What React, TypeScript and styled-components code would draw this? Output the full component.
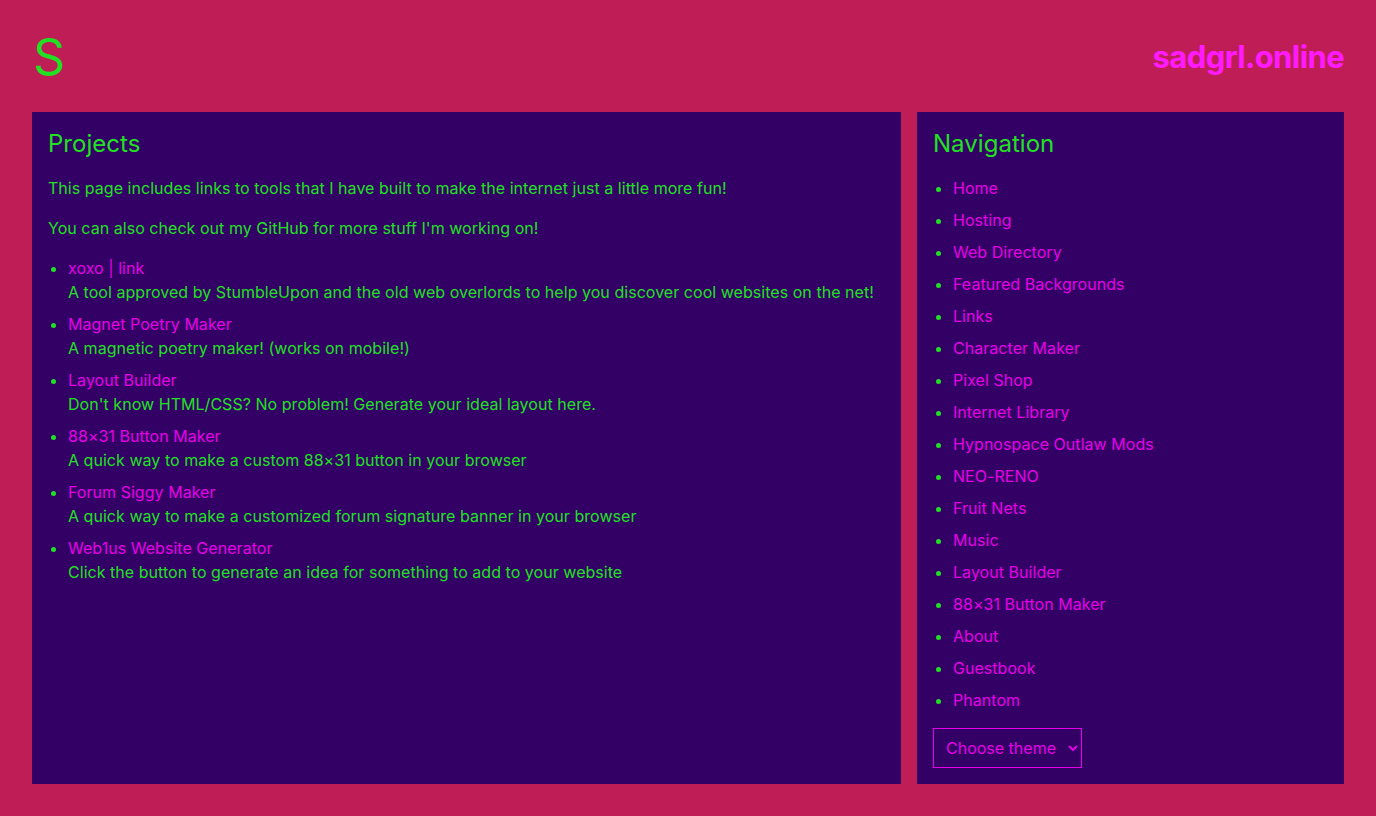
import React from "react";
import styled, { createGlobalStyle } from "styled-components";

const GREEN = "#22e022";
const MAGENTA = "#e600e6";
const BG = "#be1e55";
const PANEL = "#330066";

const Global = createGlobalStyle`
  html, body { margin: 0; padding: 0; background: ${BG}; }
  body { font-family: Inter, "Noto Sans", sans-serif; font-size: 16px; line-height: 24px; color: ${GREEN}; letter-spacing: 0.04px; }
  * { box-sizing: border-box; }
`;

const Page = styled.div`
  padding: 0 32px 32px 32px;
  min-height: 816px;
`;

const Header = styled.header`
  height: 112px;
  display: flex;
  align-items: center;
  justify-content: space-between;
`;

const Logo = styled.div`
  font-size: 50px;
  line-height: 1;
  color: ${GREEN};
  padding-left: 1px;
  margin-top: 1px;
`;

const SiteTitle = styled.a`
  font-size: 31px;
  font-weight: 700;
  color: #ff1aff;
  text-decoration: none;
  letter-spacing: -0.6px;
  margin-top: 1px;
`;

const Columns = styled.div`
  display: grid;
  grid-template-columns: 1fr 427px;
  gap: 16px;
  align-items: stretch;
`;

const Panel = styled.section`
  background: ${PANEL};
  padding: 16px;
`;

const Heading = styled.h2`
  margin: 0 0 16px 0;
  font-size: 24px;
  font-weight: 400;
  line-height: 32px;
  color: ${GREEN};
`;

const Para = styled.p`
  margin: 0 0 16px 0;
`;

const List = styled.ul`
  margin: 0;
  padding-left: 20px;
  list-style: disc;
`;

const Item = styled.li<{ $gap?: number }>`
  margin-bottom: ${(p) => p.$gap ?? 8}px;
  &::marker { color: ${GREEN}; }
`;

const Link = styled.a`
  color: ${MAGENTA};
  text-decoration: none;
`;

const Desc = styled.div`
  color: ${GREEN};
`;

const ThemeSelect = styled.select`
  margin-top: 8px;
  font-family: Inter, "Noto Sans", sans-serif;
  font-size: 16px;
  color: ${MAGENTA};
  background: transparent;
  border: 1px solid ${MAGENTA};
  border-radius: 0;
  padding: 8px 4px 8px 8px;
  height: 40px;
  width: 149px;
  outline: none;
`;

const projects = [
  {
    title: ["xoxo", "link"],
    desc: "A tool approved by StumbleUpon and the old web overlords to help you discover cool websites on the net!",
  },
  { title: ["Magnet Poetry Maker"], desc: "A magnetic poetry maker! (works on mobile!)" },
  { title: ["Layout Builder"], desc: "Don't know HTML/CSS? No problem! Generate your ideal layout here." },
  { title: ["88×31 Button Maker"], desc: "A quick way to make a custom 88×31 button in your browser" },
  { title: ["Forum Siggy Maker"], desc: "A quick way to make a customized forum signature banner in your browser" },
  { title: ["Web1us Website Generator"], desc: "Click the button to generate an idea for something to add to your website" },
];

const nav = [
  "Home",
  "Hosting",
  "Web Directory",
  "Featured Backgrounds",
  "Links",
  "Character Maker",
  "Pixel Shop",
  "Internet Library",
  "Hypnospace Outlaw Mods",
  "NEO-RENO",
  "Fruit Nets",
  "Music",
  "Layout Builder",
  "88×31 Button Maker",
  "About",
  "Guestbook",
  "Phantom",
];

export default function App() {
  return (
    <Page>
      <Global />
      <Header>
        <Logo>S</Logo>
        <SiteTitle href="#">sadgrl.online</SiteTitle>
      </Header>
      <Columns>
        <Panel>
          <Heading>Projects</Heading>
          <Para>This page includes links to tools that I have built to make the internet just a little more fun!</Para>
          <Para>You can also check out my GitHub for more stuff I'm working on!</Para>
          <List>
            {projects.map((p, i) => (
              <Item key={i}>
                {p.title.length === 2 ? (
                  <>
                    <Link href="#">{p.title[0]}</Link>
                    <Link as="span"> | </Link>
                    <Link href="#">{p.title[1]}</Link>
                  </>
                ) : (
                  <Link href="#">{p.title[0]}</Link>
                )}
                <Desc>{p.desc}</Desc>
              </Item>
            ))}
          </List>
        </Panel>
        <Panel>
          <Heading>Navigation</Heading>
          <List>
            {nav.map((n, i) => (
              <Item key={i}>
                <Link href="#">{n}</Link>
              </Item>
            ))}
          </List>
          <ThemeSelect defaultValue="">
            <option value="">Choose theme</option>
            <option value="a">Theme 1</option>
          </ThemeSelect>
        </Panel>
      </Columns>
    </Page>
  );
}
